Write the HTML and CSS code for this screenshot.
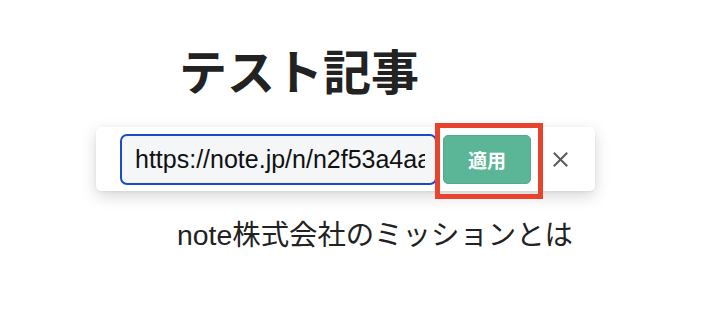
FILE: index.html
```html
<!DOCTYPE html>
<html lang="ja">
<head>
<meta charset="utf-8">
<title>テスト記事</title>
<link rel="stylesheet" href="styles.css">
</head>
<body>
<main class="page">
  <h1 class="title">テスト記事</h1>
  <div class="embed-bar">
    <input class="url-input" type="text" value="https://note.jp/n/n2f53a4aa0b7c">
    <div class="apply-wrap">
      <button class="apply-btn" type="button">適用</button>
      <span class="highlight"></span>
    </div>
    <button class="close-btn" type="button" aria-label="閉じる">
      <svg width="15" height="15" viewBox="0 0 15 15"><path d="M1.5 1.5 L13.5 13.5 M13.5 1.5 L1.5 13.5" stroke="#5a5a5a" stroke-width="2" stroke-linecap="square" fill="none"/></svg>
    </button>
  </div>
  <p class="body-text">note株式会社のミッションとは</p>
</main>
</body>
</html>
```

FILE: styles.css
```css
html, body {
  margin: 0;
  padding: 0;
  background: #ffffff;
}

body {
  font-family: "Liberation Sans", "Noto Sans CJK JP", sans-serif;
  color: #222222;
}

.page {
  padding-top: 41px;
}

.title {
  margin: 0 0 0 179px;
  font-family: "Noto Sans CJK JP", sans-serif;
  font-size: 48px;
  line-height: 56px;
  font-weight: 700;
  color: #222222;
}

.embed-bar {
  margin: 30px 0 0 96px;
  width: 499px;
  height: 64px;
  box-sizing: border-box;
  padding: 0 6px 0 24px;
  display: flex;
  align-items: center;
  background: #ffffff;
  border-radius: 5px;
  box-shadow: 0 5px 16px rgba(0, 0, 0, 0.16), 0 1px 3px rgba(0, 0, 0, 0.06);
}

.url-input {
  width: 317px;
  height: 51px;
  box-sizing: border-box;
  margin: 0;
  padding: 0 10px 0 13px;
  border: 2.5px solid #1b4cc8;
  border-radius: 7px;
  background: #f4f6f7;
  font-family: "Liberation Sans", sans-serif;
  font-size: 25px;
  color: #111111;
  outline: none;
}

.apply-wrap {
  position: relative;
  margin-left: 6px;
  display: flex;
}

.apply-btn {
  width: 88px;
  height: 49px;
  margin: 0;
  padding: 0;
  border: 1px solid #51ad8e;
  border-radius: 5px;
  background: #5bb597;
  color: #ffffff;
  font-family: "Noto Sans CJK JP", sans-serif;
  font-size: 19px;
  font-weight: 700;
}

.highlight {
  position: absolute;
  top: -12px;
  bottom: -15px;
  left: -8px;
  right: -12px;
  border: 5px solid #e8432c;
  pointer-events: none;
}

.close-btn {
  width: 58px;
  height: 49px;
  margin: 0;
  padding: 0;
  border: none;
  background: transparent;
  display: flex;
  align-items: center;
  justify-content: center;
}

.close-btn svg {
  display: block;
}

.body-text {
  margin: 26px 0 0 177px;
  font-family: "Liberation Sans", "Noto Sans CJK JP", sans-serif;
  font-size: 28.4px;
  line-height: 36px;
  color: #222222;
}
```
